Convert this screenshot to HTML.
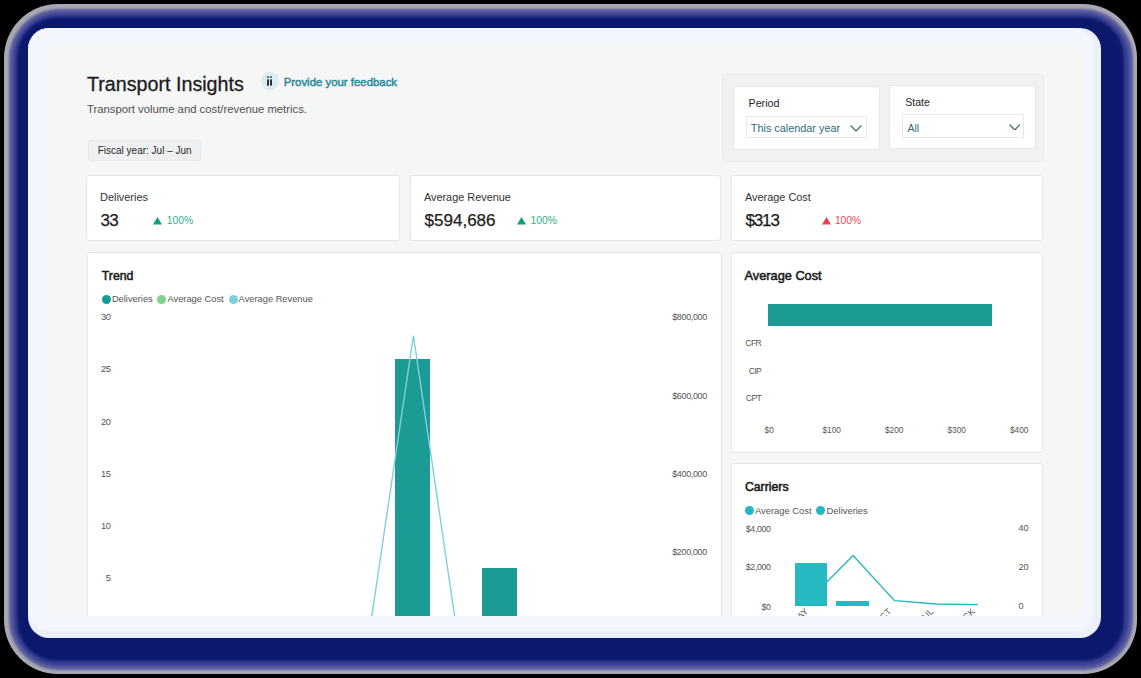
<!DOCTYPE html>
<html><head><meta charset="utf-8">
<style>
html,body{margin:0;padding:0;}
body{width:1141px;height:678px;position:relative;overflow:hidden;background:#000;font-family:"Liberation Sans",sans-serif;}
.r,.t{position:absolute;}
.t{white-space:nowrap;}
.sh1{position:absolute;left:4px;top:4px;width:1133px;height:670px;border-radius:54px;background:#a8a8b4;}
.sh2{position:absolute;left:8.5px;top:8.5px;width:1124px;height:661px;border-radius:50px;background:#5a5c9c;filter:blur(1px);}
.sh3{position:absolute;left:12.5px;top:12.5px;width:1116px;height:653px;border-radius:46px;background:#3a4296;filter:blur(1px);}
.sh4{position:absolute;left:17px;top:17px;width:1107px;height:644px;border-radius:40px;background:#0c186c;filter:blur(1.5px);}
.card{position:absolute;left:28px;top:28px;width:1073px;height:610px;border-radius:21px;background:#ebeffa;overflow:hidden;}
.card2{position:absolute;left:28px;top:28px;width:1066px;height:603px;border-radius:21px 21px 18px 21px;background:#f4f6fd;}
.inner{position:absolute;left:45px;top:44px;width:1038px;height:572px;border-radius:13px 13px 8px 8px;background:#f5f6f6;overflow:hidden;}
.wrap{position:absolute;left:-45px;top:-44px;width:1141px;height:678px;}
</style></head><body>
<div class="sh1"></div><div class="sh2"></div><div class="sh3"></div><div class="sh4"></div>
<div class="card"></div><div class="card2"></div>
<div class="inner"><div class="wrap">
<div class="t" style="left:87.00px;top:74.62px;font-size:19.70px;line-height:19.70px;color:#1c1c1c;font-weight:400;-webkit-text-stroke:0.3px #1c1c1c;">Transport Insights</div>
<div class="t" style="left:87.00px;top:104.33px;font-size:11.30px;line-height:11.30px;color:#505050;font-weight:400;">Transport volume and cost/revenue metrics.</div>
<div class="r" style="left:260.50px;top:72.00px;width:18.50px;height:18.40px;background:#d8ecf1;border-radius:50%;"></div>
<svg class="r" style="left:266px;top:75px" width="8" height="12" viewBox="0 0 8 12"><rect x="1" y="1.3" width="2" height="1.5" rx="0.6" fill="#303030"/><rect x="4" y="1.3" width="2" height="1.5" rx="0.6" fill="#303030"/><rect x="1" y="4.2" width="2" height="6.5" rx="0.6" fill="#303030"/><rect x="4" y="4.2" width="2" height="6.5" rx="0.6" fill="#303030"/></svg>
<div class="t" style="left:283.70px;top:76.95px;font-size:11.40px;line-height:11.40px;color:#2a8799;font-weight:400;-webkit-text-stroke:0.45px #2a8799;">Provide your feedback</div>
<div class="r" style="left:88.00px;top:140.00px;width:113.00px;height:21.00px;background:#eef0f1;border:1px solid #e6e8ea;box-sizing:border-box;border-radius:3px;"></div>
<div class="t" style="left:97.70px;top:145.53px;font-size:10.00px;line-height:10.00px;color:#2a2a2a;font-weight:400;">Fiscal year: Jul &ndash; Jun</div>
<div class="r" style="left:722.00px;top:74.00px;width:322.00px;height:88.00px;background:#eff1f2;border:1px solid #e8eaec;box-sizing:border-box;border-radius:4px;"></div>
<div class="r" style="left:733.00px;top:86.00px;width:147.00px;height:64.00px;background:#fff;border:1px solid #e6e8ea;box-sizing:border-box;border-radius:3px;"></div>
<div class="t" style="left:748.50px;top:97.94px;font-size:10.70px;line-height:10.70px;color:#242424;font-weight:400;">Period</div>
<div class="r" style="left:745.50px;top:116.10px;width:121.20px;height:22.40px;background:#fff;border:1px solid #e8e8e8;box-sizing:border-box;"></div>
<div class="t" style="left:750.80px;top:123.30px;font-size:10.87px;line-height:10.87px;color:#2c6b7a;font-weight:400;">This calendar year</div>
<div class="r" style="left:889.00px;top:85.00px;width:147.00px;height:64.00px;background:#fff;border:1px solid #e6e8ea;box-sizing:border-box;border-radius:3px;"></div>
<div class="t" style="left:905.30px;top:96.98px;font-size:10.54px;line-height:10.54px;color:#242424;font-weight:400;">State</div>
<div class="r" style="left:902.10px;top:114.20px;width:122.30px;height:23.50px;background:#fff;border:1px solid #e8e8e8;box-sizing:border-box;"></div>
<div class="t" style="left:907.50px;top:123.01px;font-size:10.50px;line-height:10.50px;color:#2c6b7a;font-weight:400;">All</div>
<svg class="r" style="left:850px;top:125px" width="12" height="6.5" viewBox="0 0 12 6.5"><polyline points="0.5,0.5 6.0,6.0 11.5,0.5" fill="none" stroke="#3f6a78" stroke-width="1.2"/></svg>
<svg class="r" style="left:1008.5px;top:123.5px" width="11.5" height="6.5" viewBox="0 0 11.5 6.5"><polyline points="0.5,0.5 5.75,6.0 11.0,0.5" fill="none" stroke="#3f6a78" stroke-width="1.2"/></svg>
<div class="r" style="left:86.00px;top:175.00px;width:314.00px;height:66.00px;background:#fff;border:1px solid #e4e6e8;border-radius:3px;box-sizing:border-box;"></div>
<div class="t" style="left:100.10px;top:191.57px;font-size:10.90px;line-height:10.90px;color:#333;font-weight:400;">Deliveries</div>
<div class="t" style="left:100.40px;top:212.01px;font-size:17.00px;line-height:17.00px;color:#1c1c1c;font-weight:400;-webkit-text-stroke:0.25px #1c1c1c;letter-spacing:-0.6px;">33</div>
<svg class="r" style="left:153px;top:217px" width="9" height="7.5" viewBox="0 0 9 7.5"><polygon points="4.5,0 9,7.5 0,7.5" fill="#14a07c"/></svg>
<div class="t" style="left:166.80px;top:215.78px;font-size:10.30px;line-height:10.30px;color:#34ad8c;font-weight:400;">100%</div>
<div class="r" style="left:410.00px;top:175.00px;width:311.00px;height:66.00px;background:#fff;border:1px solid #e4e6e8;border-radius:3px;box-sizing:border-box;"></div>
<div class="t" style="left:423.90px;top:191.57px;font-size:10.90px;line-height:10.90px;color:#333;font-weight:400;">Average Revenue</div>
<div class="t" style="left:424.60px;top:212.01px;font-size:17.00px;line-height:17.00px;color:#1c1c1c;font-weight:400;-webkit-text-stroke:0.25px #1c1c1c;">$594,686</div>
<svg class="r" style="left:517.2px;top:217px" width="9" height="7.5" viewBox="0 0 9 7.5"><polygon points="4.5,0 9,7.5 0,7.5" fill="#14a07c"/></svg>
<div class="t" style="left:530.50px;top:215.78px;font-size:10.30px;line-height:10.30px;color:#34ad8c;font-weight:400;">100%</div>
<div class="r" style="left:731.00px;top:175.00px;width:312.00px;height:66.00px;background:#fff;border:1px solid #e4e6e8;border-radius:3px;box-sizing:border-box;"></div>
<div class="t" style="left:745.00px;top:191.57px;font-size:10.90px;line-height:10.90px;color:#333;font-weight:400;">Average Cost</div>
<div class="t" style="left:745.40px;top:212.01px;font-size:17.00px;line-height:17.00px;color:#1c1c1c;font-weight:400;-webkit-text-stroke:0.25px #1c1c1c;letter-spacing:-1.1px;">$313</div>
<svg class="r" style="left:821.5px;top:217px" width="9" height="7.5" viewBox="0 0 9 7.5"><polygon points="4.5,0 9,7.5 0,7.5" fill="#e8404d"/></svg>
<div class="t" style="left:834.90px;top:215.78px;font-size:10.30px;line-height:10.30px;color:#e84b57;font-weight:400;">100%</div>
<div class="r" style="left:87.00px;top:252.00px;width:635.00px;height:448.00px;background:#fff;border:1px solid #e4e6e8;border-radius:3px;box-sizing:border-box;"></div>
<div class="t" style="left:101.80px;top:269.79px;font-size:12.30px;line-height:12.30px;color:#1c1c1c;font-weight:400;-webkit-text-stroke:0.55px #1c1c1c;">Trend</div>
<div class="r" style="left:102.00px;top:295.00px;width:9.00px;height:9.00px;background:#1b9c92;border-radius:50%;"></div>
<div class="t" style="left:111.90px;top:294.73px;font-size:9.30px;line-height:9.30px;color:#555;font-weight:400;">Deliveries</div>
<div class="r" style="left:157.00px;top:295.00px;width:9.00px;height:9.00px;background:#7fd38a;border-radius:50%;"></div>
<div class="t" style="left:167.50px;top:294.73px;font-size:9.30px;line-height:9.30px;color:#555;font-weight:400;">Average Cost</div>
<div class="r" style="left:229.00px;top:295.00px;width:9.00px;height:9.00px;background:#7ccfd8;border-radius:50%;"></div>
<div class="t" style="left:238.60px;top:294.73px;font-size:9.30px;line-height:9.30px;color:#555;font-weight:400;">Average Revenue</div>
<div class="t" style="right:1030.60px;top:312.93px;font-size:9.30px;line-height:9.30px;color:#555;font-weight:400;letter-spacing:-0.5px;">30</div>
<div class="t" style="right:1030.60px;top:365.23px;font-size:9.30px;line-height:9.30px;color:#555;font-weight:400;letter-spacing:-0.5px;">25</div>
<div class="t" style="right:1030.60px;top:417.53px;font-size:9.30px;line-height:9.30px;color:#555;font-weight:400;letter-spacing:-0.5px;">20</div>
<div class="t" style="right:1030.60px;top:469.83px;font-size:9.30px;line-height:9.30px;color:#555;font-weight:400;letter-spacing:-0.5px;">15</div>
<div class="t" style="right:1030.60px;top:522.13px;font-size:9.30px;line-height:9.30px;color:#555;font-weight:400;letter-spacing:-0.5px;">10</div>
<div class="t" style="right:1030.60px;top:574.43px;font-size:9.30px;line-height:9.30px;color:#555;font-weight:400;letter-spacing:-0.5px;">5</div>
<div class="t" style="left:672.20px;top:313.28px;font-size:9.00px;line-height:9.00px;color:#555;font-weight:400;letter-spacing:-0.35px;">$800,000</div>
<div class="t" style="left:672.20px;top:391.58px;font-size:9.00px;line-height:9.00px;color:#555;font-weight:400;letter-spacing:-0.35px;">$600,000</div>
<div class="t" style="left:672.20px;top:469.88px;font-size:9.00px;line-height:9.00px;color:#555;font-weight:400;letter-spacing:-0.35px;">$400,000</div>
<div class="t" style="left:672.20px;top:548.18px;font-size:9.00px;line-height:9.00px;color:#555;font-weight:400;letter-spacing:-0.35px;">$200,000</div>
<div class="r" style="left:395.00px;top:359.00px;width:35.10px;height:341.00px;background:#1b9b93;"></div>
<div class="r" style="left:482.00px;top:568.00px;width:34.50px;height:132.00px;background:#1b9b93;"></div>
<svg class="r" style="left:0;top:0" width="1141" height="678"><polyline points="371.8,616 413.4,335.6 454.6,616" fill="none" stroke="#80d0d9" stroke-width="1.4"/></svg>
<div class="r" style="left:731.00px;top:252.00px;width:312.00px;height:201.00px;background:#fff;border:1px solid #e4e6e8;border-radius:3px;box-sizing:border-box;"></div>
<div class="t" style="left:744.60px;top:270.01px;font-size:12.75px;line-height:12.75px;color:#1c1c1c;font-weight:400;-webkit-text-stroke:0.55px #1c1c1c;">Average Cost</div>
<div class="r" style="left:768.20px;top:304.10px;width:223.80px;height:21.80px;background:#1b9b93;"></div>
<div class="t" style="right:379.80px;top:338.92px;font-size:8.60px;line-height:8.60px;color:#555;font-weight:400;letter-spacing:-0.6px;">CFR</div>
<div class="t" style="right:379.80px;top:366.92px;font-size:8.60px;line-height:8.60px;color:#555;font-weight:400;letter-spacing:-0.6px;">CIP</div>
<div class="t" style="right:379.80px;top:394.42px;font-size:8.60px;line-height:8.60px;color:#555;font-weight:400;letter-spacing:-0.6px;">CPT</div>
<div class="t" style="left:569.20px;width:400px;text-align:center;top:425.57px;font-size:8.30px;line-height:8.30px;color:#555;font-weight:400;">$0</div>
<div class="t" style="left:631.70px;width:400px;text-align:center;top:425.57px;font-size:8.30px;line-height:8.30px;color:#555;font-weight:400;">$100</div>
<div class="t" style="left:694.20px;width:400px;text-align:center;top:425.57px;font-size:8.30px;line-height:8.30px;color:#555;font-weight:400;">$200</div>
<div class="t" style="left:756.70px;width:400px;text-align:center;top:425.57px;font-size:8.30px;line-height:8.30px;color:#555;font-weight:400;">$300</div>
<div class="t" style="left:819.20px;width:400px;text-align:center;top:425.57px;font-size:8.30px;line-height:8.30px;color:#555;font-weight:400;">$400</div>
<div class="r" style="left:731.00px;top:463.00px;width:312.00px;height:237.00px;background:#fff;border:1px solid #e4e6e8;border-radius:3px;box-sizing:border-box;"></div>
<div class="t" style="left:744.90px;top:481.19px;font-size:12.30px;line-height:12.30px;color:#1c1c1c;font-weight:400;-webkit-text-stroke:0.55px #1c1c1c;">Carriers</div>
<div class="r" style="left:745.00px;top:506.00px;width:9.00px;height:9.00px;background:#25b7bf;border-radius:50%;"></div>
<div class="t" style="left:755.00px;top:505.64px;font-size:9.40px;line-height:9.40px;color:#555;font-weight:400;">Average Cost</div>
<div class="r" style="left:816.00px;top:506.00px;width:9.00px;height:9.00px;background:#25b7bf;border-radius:50%;"></div>
<div class="t" style="left:826.60px;top:505.64px;font-size:9.40px;line-height:9.40px;color:#555;font-weight:400;">Deliveries</div>
<div class="t" style="right:370.40px;top:524.55px;font-size:8.80px;line-height:8.80px;color:#555;font-weight:400;letter-spacing:-0.35px;">$4,000</div>
<div class="t" style="right:370.40px;top:563.25px;font-size:8.80px;line-height:8.80px;color:#555;font-weight:400;letter-spacing:-0.35px;">$2,000</div>
<div class="t" style="right:370.40px;top:602.55px;font-size:8.80px;line-height:8.80px;color:#555;font-weight:400;letter-spacing:-0.35px;">$0</div>
<div class="t" style="left:1018.60px;top:524.41px;font-size:9.20px;line-height:9.20px;color:#555;font-weight:400;letter-spacing:-0.3px;">40</div>
<div class="t" style="left:1018.60px;top:563.11px;font-size:9.20px;line-height:9.20px;color:#555;font-weight:400;letter-spacing:-0.3px;">20</div>
<div class="t" style="left:1018.60px;top:602.41px;font-size:9.20px;line-height:9.20px;color:#555;font-weight:400;letter-spacing:-0.3px;">0</div>
<svg class="r" style="left:0;top:0" width="1141" height="678"><polyline points="811,598 853.1,555.6 894.5,600.6 936.5,604 978,604.6" fill="none" stroke="#25b7bf" stroke-width="1.4"/></svg>
<div class="r" style="left:794.80px;top:562.60px;width:32.60px;height:43.80px;background:#25b9c1;"></div>
<div class="r" style="left:836.30px;top:601.40px;width:32.60px;height:5.00px;background:#25b9c1;"></div>
<div class="t" style="right:337px;top:607px;font-size:9px;line-height:9px;color:#555;transform-origin:100% 0;transform:rotate(-45deg);">MAY</div>
<div class="t" style="right:254px;top:607px;font-size:9px;line-height:9px;color:#555;transform-origin:100% 0;transform:rotate(-45deg);">ACT</div>
<div class="t" style="right:212px;top:607px;font-size:9px;line-height:9px;color:#555;transform-origin:100% 0;transform:rotate(-45deg);">JUL</div>
<div class="t" style="right:170px;top:607px;font-size:9px;line-height:9px;color:#555;transform-origin:100% 0;transform:rotate(-45deg);">ACK</div>
</div></div>
</body></html>
